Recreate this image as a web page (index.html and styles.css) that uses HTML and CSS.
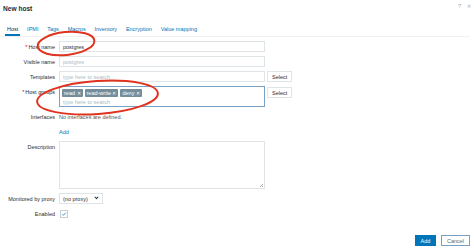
FILE: index.html
```html
<!DOCTYPE html>
<html>
<head>
<meta charset="utf-8">
<link rel="stylesheet" href="styles.css">
</head>
<body>
<div class="dialog">
  <div class="head">
    <div class="title">New host</div>
    <div class="head-icons"><span class="hi">?</span><span class="hi x">✕</span></div>
  </div>
  <div class="tabs">
    <span class="tab active">Host</span>
    <span class="tab">IPMI</span>
    <span class="tab">Tags</span>
    <span class="tab">Macros</span>
    <span class="tab">Inventory</span>
    <span class="tab">Encryption</span>
    <span class="tab">Value mapping</span>
  </div>
  <div class="form">
    <div class="lbl"><span class="req">*</span> Host name</div>
    <div class="field"><div class="input">postgres</div></div>
    <div></div>

    <div class="lbl">Visible name</div>
    <div class="field"><div class="input ph">postgres</div></div>
    <div></div>

    <div class="lbl">Templates</div>
    <div class="field"><div class="input ph">type here to search</div></div>
    <div class="btncell"><span class="btn">Select</span></div>

    <div class="lbl top"><span class="req">*</span> Host groups</div>
    <div class="field"><div class="multi">
      <div class="tags"><span class="tag">read <b>✕</b></span><span class="tag">read-write <b>✕</b></span><span class="tag">deny <b>✕</b></span></div>
      <div class="ph ph2">type here to search</div>
    </div></div>
    <div class="btncell top"><span class="btn">Select</span></div>

    <div class="lbl">Interfaces</div>
    <div class="field text">No interfaces are defined.</div>
    <div></div>

    <div></div>
    <div class="field link">Add</div>
    <div></div>

    <div class="lbl top desc">Description</div>
    <div class="field"><div class="textarea"><span class="grip"></span></div></div>
    <div></div>

    <div class="lbl">Monitored by proxy</div>
    <div class="field"><div class="select">(no proxy)<span class="chev"></span></div></div>
    <div></div>

    <div class="lbl">Enabled</div>
    <div class="field"><div class="check"><svg viewBox="0 0 8 8" width="8" height="8"><path d="M1.7 4.2 L3.3 5.7 L6.4 2.4" fill="none" stroke="#0275b8" stroke-width="1"/></svg></div></div>
    <div></div>
  </div>
  <div class="footer">
    <span class="fbtn primary">Add</span>
    <span class="fbtn secondary">Cancel</span>
  </div>
</div>
<svg class="marks" width="474" height="250" viewBox="0 0 474 250">
  <ellipse cx="66" cy="43.5" rx="28.5" ry="11.5" transform="rotate(-6 66 43.5)" fill="none" stroke="#e0331f" stroke-width="2"/>
  <ellipse cx="97.5" cy="97.5" rx="60.5" ry="16.5" transform="rotate(-4 97.5 97.5)" fill="none" stroke="#e0331f" stroke-width="2"/>
</svg>
</body>
</html>
```

FILE: styles.css
```css
* { box-sizing: border-box; }
html, body { margin: 0; padding: 0; background: #fff; }
body {
  width: 474px; height: 250px; overflow: hidden; position: relative;
  font-family: "Liberation Sans", Arial, sans-serif; font-size: 5.5px; color: #1f2c33;
}
.dialog { display: flex; flex-direction: column; height: 250px; }
.head { display: flex; justify-content: space-between; align-items: flex-start; height: 21px; padding: 3px 3px 0 3px; }
.title { font-weight: bold; font-size: 6.6px; padding-top: 2px; }
.head-icons { display: flex; gap: 6px; color: #9aa7ae; font-size: 5.5px; padding-top: 0; }
.hi.x { font-size: 5px; }
.tabs { display: flex; gap: 0; height: 16px; align-items: flex-end; padding-left: 5px; border-bottom: 1px solid #f0f0f0; margin: 0 4px 0 0; }
.tab { color: #0275b8; padding: 0 2px 2px 2px; margin-right: 4.8px; border-bottom: 2px solid transparent; }
.tab.active { color: #1f2c33; border-bottom-color: #0275b8; }
.form {
  display: grid; grid-template-columns: 55px 206px auto; column-gap: 4px; row-gap: 4px;
  grid-template-rows: 11px 11px 11px 21px 11px 11px 48px 11px 11px;
  margin-top: 4px;
}
.lbl { text-align: right; display: flex; align-items: center; justify-content: flex-end; white-space: nowrap; }
.lbl.top { align-items: flex-start; padding-top: 3px; }
.lbl.desc { padding-top: 3px; }
.req { color: #d40000; margin-right: 1px; }
.field { display: flex; align-items: center; }
.input { width: 206px; height: 11px; border: 1px solid #dfe4e7; padding: 0 3px; display: flex; align-items: center; color: #1f2c33; }
.ph { color: #acbbc2; }
.multi { width: 206px; height: 21px; border: 1px solid #7aa0c4; background: #fff; padding: 2px 2px 0 2px; display: flex; flex-direction: column; gap: 2px; }
.tags { display: flex; gap: 2px; }
.tag { background: #768d99; color: #fff; height: 8px; padding: 0 2px; display: flex; align-items: center; gap: 1.5px; border-radius: 1px; }
.tag b { font-weight: normal; font-size: 4.5px; }
.ph2 { padding-left: 1px; }
.btncell { display: flex; align-items: center; margin-left: -2px; }
.btncell.top { align-items: flex-start; padding-top: 1px; }
.btn { height: 11px; border: 1px solid #dfe4e7; padding: 0 4px; display: flex; align-items: center; color: #1f2c33; background: #fff; }
.text { color: #555; }
.link { color: #0275b8; }
.textarea { width: 206px; height: 48px; border: 1px solid #dfe4e7; position: relative; }
.grip { position: absolute; right: 1px; bottom: 1px; width: 3px; height: 3px; background: linear-gradient(135deg, transparent 50%, #b0b0b0 50%, #b0b0b0 60%, transparent 60%, transparent 75%, #b0b0b0 75%); }
.select { width: 44px; height: 11px; border: 1px solid #dfe4e7; padding: 0 3px; display: flex; align-items: center; justify-content: space-between; }
.chev { width: 3px; height: 3px; border-right: 1px solid #1f2c33; border-bottom: 1px solid #1f2c33; transform: rotate(45deg) translate(-1px, -1px); margin-right: 1px; }
.check { width: 8px; height: 8px; border: 1px solid #c5d0d6; display: flex; align-items: center; justify-content: center; margin-left: 1px; }
.check svg { display: block; }
.footer { display: flex; justify-content: flex-end; gap: 5px; padding: 0 4px 0 0; margin-top: auto; margin-bottom: 4px; }
.fbtn { height: 11px; display: flex; align-items: center; padding: 0 5px; }
.primary { background: #0275b8; color: #fff; border: 1px solid #0275b8; width: 21px; justify-content: center; }
.secondary { border: 1px solid #7a9fc0; color: #5b6b73; width: 29px; justify-content: center; }
.marks { position: absolute; left: 0; top: 0; pointer-events: none; }
```
